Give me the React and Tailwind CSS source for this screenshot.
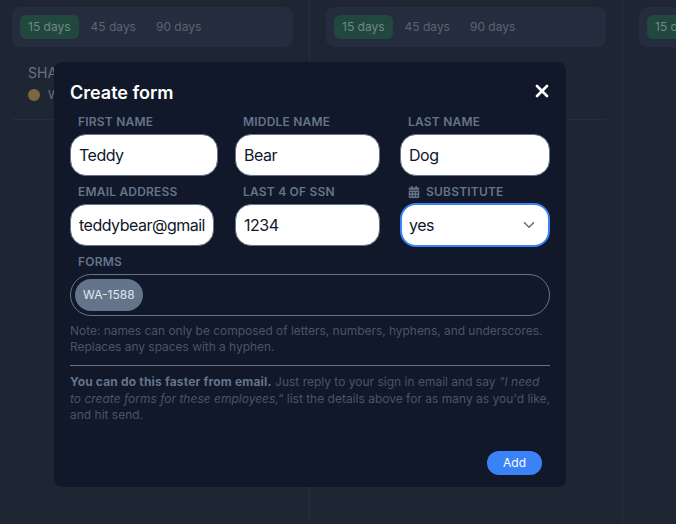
import React from 'react';
import { X, ChevronDown } from 'lucide-react';
import { FaCalendarAlt } from 'react-icons/fa';

const Column = ({ name, status, first, last }) => (
  <div className={`h-full w-[313px] shrink-0 pr-4 ${first ? 'pl-[15px]' : 'pl-4'} ${last ? '' : 'border-r border-[#262e3d]'}`}>
    <div className="h-[7px] overflow-hidden text-sm text-[#4b5563]">
      <p className="-mt-[18px] leading-5">Showing signed-in days, by employee</p>
    </div>
    <div className="flex h-10 items-center gap-1 rounded-lg bg-[#252c3d] px-2 text-xs text-[#5d6472]">
      <span className="rounded-md bg-[#20483f] px-2 py-1.5 leading-[12px] text-[#6f8a80]">15 days</span>
      <span className="px-2">45 days</span>
      <span className="px-2">90 days</span>
    </div>
    {name && (
      <div className="mt-[18px] h-[55px] border-b border-[#262e3d] pl-4">
        <p className="text-sm leading-4 text-[#6b7280]">{name}</p>
        <div className="mt-[6px] flex items-center gap-2 text-xs text-[#6b7280]">
          <span className="h-3 w-3 rounded-full bg-[#7c6741]" />
          {status}
        </div>
      </div>
    )}
  </div>
);

const labelClass = 'block h-[22px] pl-2 text-xs font-semibold uppercase leading-[20px] tracking-[0.2px] text-[#64748b]';

const Field = ({ label, value, className }) => (
  <div className={className}>
    <label className={labelClass}>{label}</label>
    <input
      readOnly
      defaultValue={value}
      className="h-[42px] w-full rounded-2xl border border-[#64748b] bg-white px-2 text-base tracking-[-0.5px] text-[#0f172a] outline-none"
    />
  </div>
);

export default function App() {
  return (
    <div className="relative h-[524px] w-[676px] overflow-hidden bg-[#1e2533] font-['Inter',sans-serif]">
      <div className="-ml-[3px] flex h-full">
        <Column first name="SHARON" status="Waiting" />
        <Column name="SHARON" status="Waiting" />
        <Column last />
      </div>

      {/* Modal */}
      <div className="absolute left-[54px] top-[62px] h-[425px] w-[512px] rounded-lg bg-[#111829] p-4">
        <div className="flex h-[30px] items-center justify-between">
          <h2 className="text-lg font-semibold text-white">Create form</h2>
          <button className="-mr-[2px] -mt-[5px] text-white">
            <X size={20} strokeWidth={3.2} />
          </button>
        </div>

        <div className="mt-[4px] flex">
          <Field label="First name" value="Teddy" className="w-[148px]" />
          <Field label="Middle name" value="Bear" className="ml-[17px] w-[145px]" />
          <Field label="Last name" value="Dog" className="ml-5 w-[150px]" />
        </div>

        <div className="mt-[6px] flex">
          <Field label="Email address" value="teddybear@gmail.com" className="w-[144px]" />
          <Field label="Last 4 of SSN" value="1234" className="ml-[21px] w-[145px]" />
          <div className="ml-5 w-[150px]">
            <label className="flex h-[22px] items-center gap-[6px] pb-[2px] pl-2 text-xs font-semibold uppercase tracking-[0.2px] text-[#64748b]">
              <FaCalendarAlt size={12} />
              Substitute
            </label>
            <div className="relative -my-px">
              <select className="block h-[44px] w-full appearance-none rounded-2xl border-2 border-[#3b82f6] bg-white pl-[7px] pr-2 text-base tracking-[-0.5px] text-[#0f172a] outline-none">
                <option>yes</option>
                <option>no</option>
              </select>
              <ChevronDown size={18} strokeWidth={2.2} className="pointer-events-none absolute right-3 top-[13px] text-[#64748b]" />
            </div>
          </div>
        </div>

        <div className="mt-[6px]">
          <label className={labelClass}>Forms</label>
          <div className="flex h-[42px] items-center rounded-[21px] border border-[#64748b] px-1">
            <span className="flex h-8 items-center rounded-2xl bg-[#64748b] px-2 text-xs text-[#e2e8f0]">WA-1588</span>
          </div>
        </div>

        <p className="mt-[7px] text-xs leading-4 tracking-[-0.04px] text-[#475569]">
          Note: names can only be composed of letters, numbers, hyphens, and underscores. Replaces any spaces with a hyphen.
        </p>

        <hr className="mt-[10px] border-[#64748b]" />

        <p className="mt-2 text-xs leading-[16.5px] text-[#475569]">
          <strong className="font-bold tracking-[0.18px] text-[#64748b]">You can do this faster from email.</strong> Just reply to your sign in email and say <em>"I need to create forms for these employees,"</em> list the details above for as many as you'd like, and hit send.
        </p>

        <button className="absolute bottom-[12px] right-[24px] h-6 w-[55px] rounded-xl bg-[#3b82f6] text-xs text-white">Add</button>
      </div>
    </div>
  );
}
